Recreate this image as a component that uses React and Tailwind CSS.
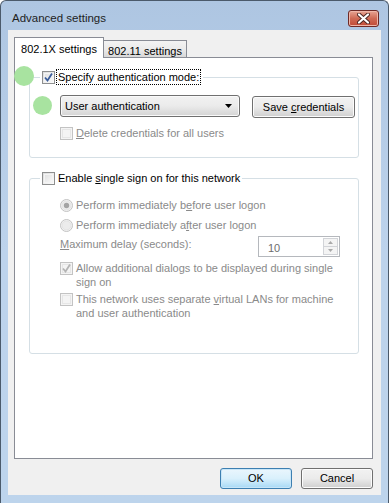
import React from 'react';

const font = { fontFamily: '"Liberation Sans", Arial, sans-serif' };

// Win7-style checkbox, 13x13
const CheckBox = ({ checked = false, disabled = false }) => (
  <span
    className={`relative inline-flex h-[13px] w-[13px] shrink-0 items-center justify-center border ${
      disabled ? 'border-[#c3c3c3] bg-[#f4f4f4]' : 'border-[#8e8f8f] bg-gradient-to-br from-[#dcdcdc] to-[#fdfdfd]'
    }`}
  >
    <span className={`absolute inset-[1px] border ${disabled ? 'border-[#e6e6e6]' : 'border-[#f4f4f4]'}`} />
    {checked && (
      <svg width="11" height="11" viewBox="0 0 11 11" className="relative">
        <path
          d="M2 5.5 L4.5 8.5 L9 1.5"
          fill="none"
          stroke={disabled ? '#b4b4b4' : '#3a5c9a'}
          strokeWidth="1.8"
        />
      </svg>
    )}
  </span>
);

const Radio = ({ checked = false }) => (
  <svg width="13" height="13" viewBox="0 0 13 13" className="shrink-0">
    <circle cx="6.5" cy="6.5" r="6" fill="#f4f4f4" stroke="#c3c3c3" />
    <circle cx="6.5" cy="6.5" r="4.5" fill="#ececec" stroke="#e3e3e3" />
    {checked && <circle cx="6.5" cy="6.5" r="2.7" fill="#a4a4a4" />}
  </svg>
);

const WinButton = ({ children, className = '', isDefault = false }) => (
  <div
    className={`flex items-center justify-center rounded-[3px] border text-[11px] text-black ${
      isDefault
        ? 'border-[#3c7fb1] bg-gradient-to-b from-[#eaf6fd] via-[#d9f0fc] to-[#a7d9f5] shadow-[inset_0_0_0_1px_#c8e6f8]'
        : 'border-[#707070] bg-gradient-to-b from-[#f2f2f2] via-[#ebebeb] to-[#cfcfcf] shadow-[inset_0_0_0_1px_#fcfcfc]'
    } ${className}`}
  >
    {children}
  </div>
);

export default function App() {
  return (
    <div className="relative h-[503px] w-[389px] overflow-hidden bg-white" style={font}>
      <div className="flex h-full w-full flex-col rounded-t-[6px] border border-b-0 border-[#4b5a6b] bg-gradient-to-b from-[#aec6e2] via-[#bdd3ec] to-[#bdd4ec]">
        {/* title bar */}
        <div className="flex h-[29px] shrink-0 items-start justify-between pl-[11px] pr-[9px]">
          <span className="mt-[10px] text-[11.5px] leading-[14px] text-[#1e1e1e]">Advanced settings</span>
          <div className="mt-[9px] flex h-[17px] w-[31px] items-center justify-center rounded-[3px] border border-[#6e2a26] bg-gradient-to-b from-[#e7a594] via-[#cf6a55] to-[#c14a36] shadow-[inset_0_0_0_1px_#efb6a8]">
            <svg width="13" height="11" viewBox="0 0 13 11">
              <path d="M2 1.5 L11 9.5 M11 1.5 L2 9.5" stroke="#4a2420" strokeWidth="4" strokeLinecap="round" />
              <path d="M2 1.5 L11 9.5 M11 1.5 L2 9.5" stroke="#ffffff" strokeWidth="2.2" strokeLinecap="round" />
            </svg>
          </div>
        </div>

        {/* client */}
        <div className="mx-[7px] flex h-[465px] flex-col bg-[#f0f0f0] pl-[6px] pr-[8px] pt-[7px]">
          {/* tabs */}
          <div className="relative z-10 flex h-[20px] items-end">
            <div className="-mb-px flex h-[21px] w-[90px] items-start justify-center border border-b-0 border-[#898c95] bg-white pt-[3px] text-[11px] text-black">
              802.1X settings
            </div>
            <div className="flex h-[17px] w-[83px] items-start justify-center border border-b-0 border-l-0 border-[#898c95] bg-gradient-to-b from-[#f3f3f3] via-[#ebebeb] to-[#d8d8d8] pt-[2px] text-[11px] text-black">
              802.11 settings
            </div>
          </div>

          {/* tab panel */}
          <div className="h-[402px] w-[359px] border border-[#898c95] bg-white">
            {/* group 1 */}
            <fieldset className="ml-[14px] mt-[11px] w-[330px] rounded-[3px] border border-[#d5dfe5] pb-[17px] pl-[10px]">
              <legend className="flex h-[16px] items-center px-[2px]">
                <CheckBox checked />
                <span className="ml-[1px] border border-dotted border-black px-[1px] text-[11px] leading-[14px] text-black">
                  Specify authentication mode:
                </span>
              </legend>
              <div className="ml-[20px] mt-[10px] flex items-start">
                <div className="flex h-[22px] w-[180px] items-center justify-between rounded-[3px] border border-[#707070] bg-gradient-to-b from-[#f2f2f2] via-[#ebebeb] to-[#d4d4d4] pl-[4px] pr-[7px] text-[11px] text-black shadow-[inset_0_0_0_1px_#fafafa]">
                  <span>User authentication</span>
                  <svg width="7" height="4" viewBox="0 0 7 4">
                    <path d="M0 0 H7 L3.5 4 Z" fill="#000" />
                  </svg>
                </div>
                <WinButton className="ml-[12px] mt-[1px] h-[22px] w-[103px]">
                  <span>
                    Save <span className="underline">c</span>redentials
                  </span>
                </WinButton>
              </div>
              <div className="ml-[20px] mt-[8px] flex h-[14px] items-center">
                <CheckBox disabled />
                <span className="ml-[3px] text-[11px] leading-[14px] text-[#8a8a8a]">
                  <span className="underline">D</span>elete credentials for all users
                </span>
              </div>
            </fieldset>

            {/* group 2 */}
            <fieldset className="ml-[14px] mt-[12px] h-[184px] w-[330px] rounded-[3px] border border-[#d5dfe5] pl-[10px]">
              <legend className="flex h-[16px] items-center px-[2px]">
                <CheckBox />
                <span className="ml-[3px] text-[11px] leading-[14px] text-black">
                  Enable <span className="underline">s</span>ingle sign on for this network
                </span>
              </legend>
              <div className="ml-[20px] flex flex-col text-[11px] leading-[14px] text-[#8a8a8a]">
                <div className="mt-[12px] flex h-[14px] items-center">
                  <Radio checked />
                  <span className="ml-[3px]">
                    Perform immediately b<span className="underline">e</span>fore user logon
                  </span>
                </div>
                <div className="mt-[6px] flex h-[14px] items-center">
                  <Radio />
                  <span className="ml-[3px]">
                    Perform immediately a<span className="underline">f</span>ter user logon
                  </span>
                </div>
                <div className="mt-[4px] flex items-start">
                  <span className="mt-[1px] w-[198px]">
                    <span className="underline">M</span>aximum delay (seconds):
                  </span>
                  <div className="flex h-[21px] w-[82px] items-center justify-between border border-[#b5b8bd] bg-white pl-[9px] pr-[1px] text-[#6d6d6d]">
                    <span className="mt-[2px]">10</span>
                    <div className="flex h-[17px] w-[15px] flex-col">
                      <div className="flex h-[9px] items-center justify-center border border-[#d2d4d8] bg-[#f4f4f4]">
                        <svg width="5" height="3" viewBox="0 0 5 3">
                          <path d="M0 3 H5 L2.5 0 Z" fill="#a9a9a9" />
                        </svg>
                      </div>
                      <div className="flex h-[8px] items-center justify-center border border-t-0 border-[#d2d4d8] bg-[#f4f4f4]">
                        <svg width="5" height="3" viewBox="0 0 5 3">
                          <path d="M0 0 H5 L2.5 3 Z" fill="#a9a9a9" />
                        </svg>
                      </div>
                    </div>
                  </div>
                </div>
                <div className="mt-[4px] flex items-start">
                  <span className="mt-[1px]">
                    <CheckBox checked disabled />
                  </span>
                  <span className="ml-[3px]">
                    Allow additional dialogs to be displayed during single
                    <br />
                    sign on
                  </span>
                </div>
                <div className="mt-[3px] flex items-start">
                  <span className="mt-[1px]">
                    <CheckBox disabled />
                  </span>
                  <span className="ml-[3px]">
                    This network uses separate <span className="underline">v</span>irtual LANs for machine
                    <br />
                    and user authentication
                  </span>
                </div>
              </div>
            </fieldset>
          </div>

          {/* dialog buttons */}
          <div className="mt-[9px] flex justify-end gap-[9px]">
            <WinButton isDefault className="h-[21px] w-[72px]">
              OK
            </WinButton>
            <WinButton className="h-[21px] w-[72px]">Cancel</WinButton>
          </div>
        </div>
      </div>

      {/* green markers */}
      <div className="absolute left-[14px] top-[66px] h-[20px] w-[20px] rounded-full bg-[#a8e3a0]" />
      <div className="absolute left-[33px] top-[96px] h-[19px] w-[19px] rounded-full bg-[#a8e3a0]" />
    </div>
  );
}
